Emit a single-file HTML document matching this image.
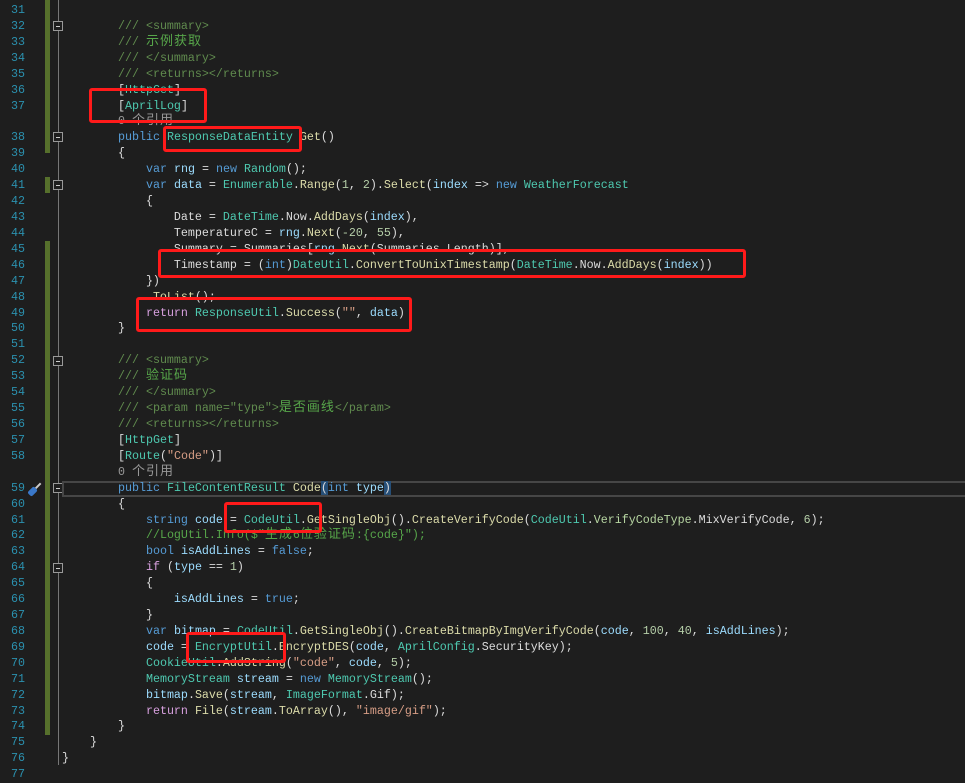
<!DOCTYPE html>
<html><head><meta charset="utf-8"><style>
body{margin:0;width:965px;height:780px;background:#1e1e1e;overflow:hidden;position:relative;font-family:"Liberation Mono","Noto Sans CJK SC",monospace;font-size:11.67px;}
pre{margin:0;position:absolute;top:3px;line-height:15.92px;font-family:inherit;font-size:inherit;white-space:pre;color:#dcdcdc}
#ln{left:0;width:25px;text-align:right;color:#2b91af}
#code{left:62px}
.k{color:#569cd6}.t{color:#4ec9b0}.m{color:#dcdcaa}.v{color:#9cdcfe}.s{color:#d69d85}.n{color:#b5cea8}.c{color:#57a64a}.d{color:#608b4e}.r{color:#d8a0df}.l{color:#999}.e{color:#b8d7a3}
.z{font-size:13px;letter-spacing:1px;line-height:0}
.bar{position:absolute;left:45px;width:5px;background:#56702c}
.fold{position:absolute;left:53px;width:8px;height:8px;border:1px solid #999;background:#1e1e1e}
.fold:after{content:"";position:absolute;left:2px;top:3.5px;width:4px;height:1px;background:#ccc}
.vl{position:absolute;left:58px;width:1px;background:#777}
.box{position:absolute;border:3px solid #ff1a1a;border-radius:3px}
.br{background:#264f78}
</style></head><body>
<div class="bar" style="top:0;height:153px"></div>
<div class="bar" style="top:177px;height:16px"></div>
<div class="bar" style="top:241px;height:494px"></div>
<div class="vl" style="top:0;height:765px"></div>
<div class="fold" style="top:21px"></div>
<div class="fold" style="top:132px"></div>
<div class="fold" style="top:180px"></div>
<div class="fold" style="top:356px"></div>
<div class="fold" style="top:483px"></div>
<div class="fold" style="top:563px"></div>
<div style="position:absolute;left:62px;top:481px;width:903px;height:12px;border:2px solid #464646"></div>
<div style="position:absolute;left:27px;top:481px;width:16px;height:16px;transform:rotate(-45deg)"><div style="position:absolute;left:0;top:5px;width:9px;height:6px;background:#3a78c9;border-radius:2px"></div><div style="position:absolute;left:9px;top:7px;width:7px;height:2px;background:#ccc"></div></div>
<pre id="ln">31
32
33
34
35
36
37

38
39
40
41
42
43
44
45
46
47
48
49
50
51
52
53
54
55
56
57
58

59
60
61
62
63
64
65
66
67
68
69
70
71
72
73
74
75
76
77</pre>
<pre id="code">

        <span class="d">/// &lt;summary&gt;</span>
        <span class="d">/// </span><span class="c z">示例获取</span>
        <span class="d">/// &lt;/summary&gt;</span>
        <span class="d">/// &lt;returns&gt;&lt;/returns&gt;</span>
        [<span class="t">HttpGet</span>]
        [<span class="t">AprilLog</span>]
        <span class="l">0 <span class="z">个引用</span></span>
        <span class="k">public</span> <span class="t">ResponseDataEntity</span> <span class="m">Get</span>()
        {
            <span class="k">var</span> <span class="v">rng</span> = <span class="k">new</span> <span class="t">Random</span>();
            <span class="k">var</span> <span class="v">data</span> = <span class="t">Enumerable</span>.<span class="m">Range</span>(<span class="n">1</span>, <span class="n">2</span>).<span class="m">Select</span>(<span class="v">index</span> =&gt; <span class="k">new</span> <span class="t">WeatherForecast</span>
            {
                Date = <span class="t">DateTime</span>.Now.<span class="m">AddDays</span>(<span class="v">index</span>),
                TemperatureC = <span class="v">rng</span>.<span class="m">Next</span>(<span class="n">-20</span>, <span class="n">55</span>),
                Summary = Summaries[<span class="v">rng</span>.<span class="m">Next</span>(Summaries.Length)],
                Timestamp = (<span class="k">int</span>)<span class="t">DateUtil</span>.<span class="m">ConvertToUnixTimestamp</span>(<span class="t">DateTime</span>.Now.<span class="m">AddDays</span>(<span class="v">index</span>))
            })
            .<span class="m">ToList</span>();
            <span class="r">return</span> <span class="t">ResponseUtil</span>.<span class="m">Success</span>(<span class="s">""</span>, <span class="v">data</span>)
        }

        <span class="d">/// &lt;summary&gt;</span>
        <span class="d">/// </span><span class="c z">验证码</span>
        <span class="d">/// &lt;/summary&gt;</span>
        <span class="d">/// &lt;param name="type"&gt;</span><span class="c z">是否画线</span><span class="d">&lt;/param&gt;</span>
        <span class="d">/// &lt;returns&gt;&lt;/returns&gt;</span>
        [<span class="t">HttpGet</span>]
        [<span class="t">Route</span>(<span class="s">"Code"</span>)]
        <span class="l">0 <span class="z">个引用</span></span>
        <span class="k">public</span> <span class="t">FileContentResult</span> <span class="m">Code</span><span class="br">(</span><span class="k">int</span> <span class="v">type</span><span class="br">)</span>
        {
            <span class="k">string</span> <span class="v">code</span> = <span class="t">CodeUtil</span>.<span class="m">GetSingleObj</span>().<span class="m">CreateVerifyCode</span>(<span class="t">CodeUtil</span>.<span class="e">VerifyCodeType</span>.MixVerifyCode, <span class="n">6</span>);
            <span class="c">//LogUtil.Info($"<span class="z">生成</span>6<span class="z">位验证码</span>:{code}");</span>
            <span class="k">bool</span> <span class="v">isAddLines</span> = <span class="k">false</span>;
            <span class="r">if</span> (<span class="v">type</span> == <span class="n">1</span>)
            {
                <span class="v">isAddLines</span> = <span class="k">true</span>;
            }
            <span class="k">var</span> <span class="v">bitmap</span> = <span class="t">CodeUtil</span>.<span class="m">GetSingleObj</span>().<span class="m">CreateBitmapByImgVerifyCode</span>(<span class="v">code</span>, <span class="n">100</span>, <span class="n">40</span>, <span class="v">isAddLines</span>);
            <span class="v">code</span> = <span class="t">EncryptUtil</span>.<span class="m">EncryptDES</span>(<span class="v">code</span>, <span class="t">AprilConfig</span>.SecurityKey);
            <span class="t">CookieUtil</span>.<span class="m">AddString</span>(<span class="s">"code"</span>, <span class="v">code</span>, <span class="n">5</span>);
            <span class="t">MemoryStream</span> <span class="v">stream</span> = <span class="k">new</span> <span class="t">MemoryStream</span>();
            <span class="v">bitmap</span>.<span class="m">Save</span>(<span class="v">stream</span>, <span class="t">ImageFormat</span>.Gif);
            <span class="r">return</span> <span class="m">File</span>(<span class="v">stream</span>.<span class="m">ToArray</span>(), <span class="s">"image/gif"</span>);
        }
    }
}
</pre>
<div class="box" style="left:89px;top:88px;width:112px;height:29px"></div>
<div class="box" style="left:163px;top:126px;width:133px;height:20px"></div>
<div class="box" style="left:158px;top:249px;width:582px;height:23px"></div>
<div class="box" style="left:136px;top:297px;width:270px;height:29px"></div>
<div class="box" style="left:224px;top:502px;width:92px;height:25px"></div>
<div class="box" style="left:186px;top:632px;width:94px;height:25px"></div>
</body></html>
